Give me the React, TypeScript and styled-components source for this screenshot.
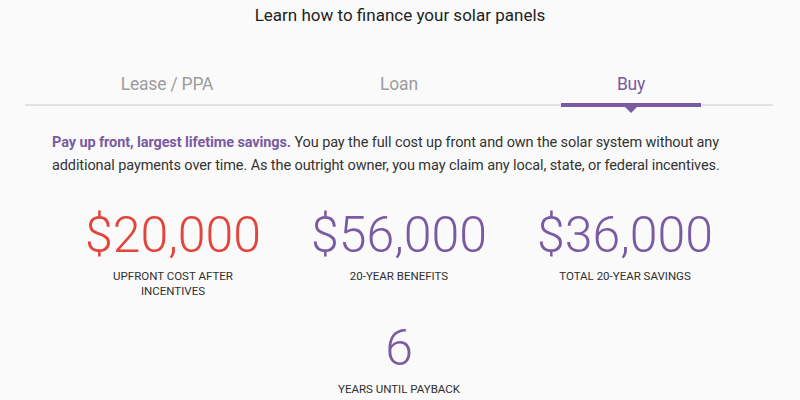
import React from 'react';
import styled, { createGlobalStyle, css } from 'styled-components';

const GlobalStyle = createGlobalStyle`
  html, body {
    margin: 0;
    padding: 0;
    background: #fafafa;
  }
  body {
    font-family: Roboto, "Liberation Sans", Arial, sans-serif;
    color: #333;
  }
`;

const PURPLE = '#7a5aa3';
const RED = '#e2453b';

type Tone = 'red' | 'purple';

const Page = styled.div`
  width: 800px;
  height: 400px;
  overflow: hidden;
  padding-top: 4px;
  box-sizing: border-box;
`;

const Title = styled.h1`
  margin: 0;
  text-align: center;
  font-size: 17px;
  line-height: 22px;
  font-weight: 400;
  color: #222;
`;

const TabBar = styled.div`
  display: flex;
  margin: 47px 27px 0 25px;
  padding: 0 26px;
  border-bottom: 2px solid #e2e2e2;
`;

const Tab = styled.div<{ $active?: boolean }>`
  position: relative;
  flex: 1;
  text-align: center;
  font-size: 17.5px;
  line-height: 22px;
  letter-spacing: -0.2px;
  padding-bottom: 9px;
  color: ${({ $active }) => ($active ? PURPLE : '#9c9c9c')};

  ${({ $active }) =>
    $active &&
    css`
      &::after {
        content: '';
        position: absolute;
        left: 50%;
        bottom: -3px;
        width: 140px;
        height: 4px;
        margin-left: -70px;
        background: ${PURPLE};
      }
      &::before {
        content: '';
        position: absolute;
        left: 50%;
        bottom: -9px;
        margin-left: -6px;
        border-left: 6px solid transparent;
        border-right: 6px solid transparent;
        border-top: 6px solid ${PURPLE};
      }
    `}
`;

const Intro = styled.p`
  margin: 26px 48px 0 52px;
  font-size: 14.5px;
  line-height: 22.5px;
  letter-spacing: -0.1px;
  color: #333;
`;

const Lead = styled.strong`
  color: ${PURPLE};
  font-weight: 700;
`;

const Stats = styled.div`
  display: grid;
  grid-template-columns: repeat(3, 226px);
  justify-content: center;
  row-gap: 24px;
  margin-top: 33px;
  padding-right: 2px;
`;

const Stat = styled.div<{ $center?: boolean }>`
  display: flex;
  flex-direction: column;
  align-items: center;
  text-align: center;
  grid-column: ${({ $center }) => ($center ? '2' : 'auto')};
`;

const Figure = styled.div<{ $tone: Tone }>`
  font-size: 50px;
  line-height: 50px;
  font-weight: 300;
  color: ${({ $tone }) => ($tone === 'red' ? RED : PURPLE)};
`;

const Label = styled.div`
  margin-top: 9px;
  max-width: 150px;
  font-size: 11.5px;
  line-height: 15px;
  text-transform: uppercase;
  color: #2f2f2f;
`;

const stats: { value: string; label: string; tone: Tone }[] = [
  { value: '$20,000', label: 'Upfront cost after incentives', tone: 'red' },
  { value: '$56,000', label: '20-year benefits', tone: 'purple' },
  { value: '$36,000', label: 'Total 20-year savings', tone: 'purple' },
];

const App: React.FC = () => {
  return (
    <Page>
      <GlobalStyle />
      <Title>Learn how to finance your solar panels</Title>
      <TabBar>
        <Tab>Lease / PPA</Tab>
        <Tab>Loan</Tab>
        <Tab $active>Buy</Tab>
      </TabBar>
      <Intro>
        <Lead>Pay up front, largest lifetime savings.</Lead> You pay the full cost up front and own the
        solar system without any additional payments over time. As the outright owner, you may claim
        any local, state, or federal incentives.
      </Intro>
      <Stats>
        {stats.map((s) => (
          <Stat key={s.value}>
            <Figure $tone={s.tone}>{s.value}</Figure>
            <Label>{s.label}</Label>
          </Stat>
        ))}
        <Stat $center>
          <Figure $tone="purple">6</Figure>
          <Label>Years until payback</Label>
        </Stat>
      </Stats>
    </Page>
  );
};

export default App;
